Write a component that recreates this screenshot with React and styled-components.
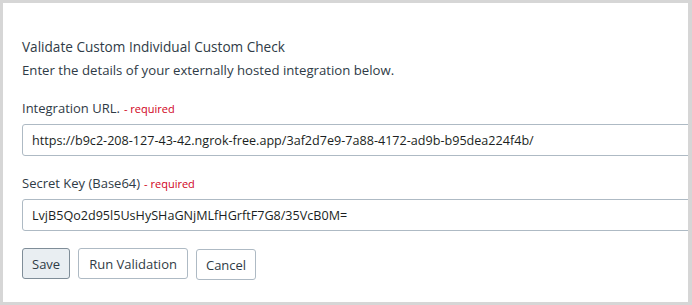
import React, { useState } from "react";
import styled, { createGlobalStyle } from "styled-components";

const GlobalStyle = createGlobalStyle`
  html, body {
    margin: 0;
    padding: 0;
    background: #d6d6d6;
  }
  body {
    font-family: "Open Sans", "Noto Sans", sans-serif;
  }
`;

const Page = styled.div`
  width: 692px;
  height: 305px;
  padding: 3px 4px 3px 3px;
  box-sizing: border-box;
`;

const Panel = styled.div`
  background: #fff;
  height: 299px;
  overflow: hidden;
  padding: 35px 0 0 19px;
  box-sizing: border-box;
`;

const Title = styled.h2`
  margin: 0;
  font-size: 13.6px;
  font-weight: 500;
  color: #2f3b46;
  line-height: 18px;
`;

const Subtitle = styled.p`
  margin: 5px 0 0;
  font-size: 13.2px;
  color: #2f3b46;
  line-height: 18px;
`;

const Field = styled.div`
  margin-top: ${(p) => p.$top}px;
`;

const Label = styled.label`
  display: block;
  font-size: 13px;
  font-weight: 500;
  color: #2f3b46;
  line-height: 18px;
  margin-bottom: 6px;
`;

const Required = styled.span`
  color: #d0021b;
  font-size: 11px;
  font-weight: 400;
  margin-left: 4px;
`;

const Input = styled.input`
  display: block;
  width: 700px;
  height: 32px;
  box-sizing: border-box;
  border: 1px solid #aebac4;
  border-radius: 3px;
  padding: 0 9px;
  font-family: "Open Sans", "Noto Sans", sans-serif;
  font-size: 12.6px;
  color: #1b1f23;
  outline: none;
`;

const Actions = styled.div`
  display: flex;
  align-items: flex-start;
  gap: 8px;
  margin-top: 17px;
`;

const Button = styled.button`
  height: 31px;
  padding: 0 ${(p) => (p.$narrow ? 9 : 10)}px;
  margin-top: ${(p) => (p.$drop ? 1 : 0)}px;
  border-radius: 3px;
  border: 1px solid ${(p) => (p.$primary ? "#7f8d98" : "#aebac4")};
  background: ${(p) => (p.$primary ? "#e9eef2" : "#fff")};
  color: #2f3b46;
  font-family: "Open Sans", "Noto Sans", sans-serif;
  font-size: 13px;
  font-weight: 500;
  cursor: pointer;
`;

export default function App() {
  const [url, setUrl] = useState(
    "https://b9c2-208-127-43-42.ngrok-free.app/3af2d7e9-7a88-4172-ad9b-b95dea224f4b/"
  );
  const [secret, setSecret] = useState("LvjB5Qo2d95l5UsHySHaGNjMLfHGrftF7G8/35VcB0M=");

  return (
    <>
      <GlobalStyle />
      <Page>
        <Panel>
          <Title>Validate Custom Individual Custom Check</Title>
          <Subtitle>Enter the details of your externally hosted integration below.</Subtitle>
          <Field $top={20}>
            <Label>
              Integration URL.<Required>- required</Required>
            </Label>
            <Input value={url} onChange={(e) => setUrl(e.target.value)} />
          </Field>
          <Field $top={18}>
            <Label>
              Secret Key (Base64)<Required>- required</Required>
            </Label>
            <Input value={secret} onChange={(e) => setSecret(e.target.value)} />
          </Field>
          <Actions>
            <Button $primary $narrow>Save</Button>
            <Button>Run Validation</Button>
            <Button $drop $narrow>Cancel</Button>
          </Actions>
        </Panel>
      </Page>
    </>
  );
}
